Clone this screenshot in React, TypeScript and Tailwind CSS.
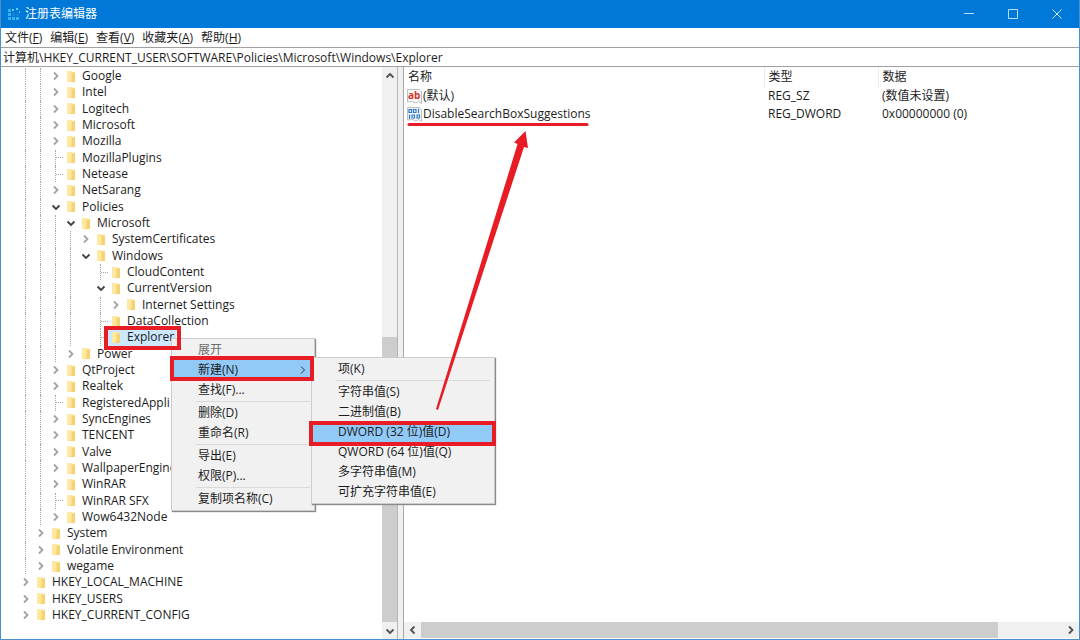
import React from 'react';

type TreeRow = { name: string; level: number; state?: 'open' | 'closed'; selected?: boolean };

const rows: TreeRow[] = [
  { name: 'Google', level: 3, state: 'closed' },
  { name: 'Intel', level: 3, state: 'closed' },
  { name: 'Logitech', level: 3, state: 'closed' },
  { name: 'Microsoft', level: 3, state: 'closed' },
  { name: 'Mozilla', level: 3, state: 'closed' },
  { name: 'MozillaPlugins', level: 3 },
  { name: 'Netease', level: 3 },
  { name: 'NetSarang', level: 3, state: 'closed' },
  { name: 'Policies', level: 3, state: 'open' },
  { name: 'Microsoft', level: 4, state: 'open' },
  { name: 'SystemCertificates', level: 5, state: 'closed' },
  { name: 'Windows', level: 5, state: 'open' },
  { name: 'CloudContent', level: 6 },
  { name: 'CurrentVersion', level: 6, state: 'open' },
  { name: 'Internet Settings', level: 7, state: 'closed' },
  { name: 'DataCollection', level: 6 },
  { name: 'Explorer', level: 6, selected: true },
  { name: 'Power', level: 4, state: 'closed' },
  { name: 'QtProject', level: 3, state: 'closed' },
  { name: 'Realtek', level: 3, state: 'closed' },
  { name: 'RegisteredAppli', level: 3 },
  { name: 'SyncEngines', level: 3, state: 'closed' },
  { name: 'TENCENT', level: 3, state: 'closed' },
  { name: 'Valve', level: 3, state: 'closed' },
  { name: 'WallpaperEngine', level: 3, state: 'closed' },
  { name: 'WinRAR', level: 3, state: 'closed' },
  { name: 'WinRAR SFX', level: 3 },
  { name: 'Wow6432Node', level: 3, state: 'closed' },
  { name: 'System', level: 2, state: 'closed' },
  { name: 'Volatile Environment', level: 2, state: 'closed' },
  { name: 'wegame', level: 2, state: 'closed' },
  { name: 'HKEY_LOCAL_MACHINE', level: 1, state: 'closed' },
  { name: 'HKEY_USERS', level: 1, state: 'closed' },
  { name: 'HKEY_CURRENT_CONFIG', level: 1, state: 'closed' },
];

// a guide runs through a row when a later sibling exists at that level
const hasGuide = (index: number, level: number) => {
  const next = rows.slice(index + 1).find(r => r.level <= level);
  return !!next && next.level === level;
};

const menus = [
  { label: '文件', key: 'F' },
  { label: '编辑', key: 'E' },
  { label: '查看', key: 'V' },
  { label: '收藏夹', key: 'A' },
  { label: '帮助', key: 'H' },
];

const keyMenu = ['展开', '新建(N)', '查找(F)...', '-', '删除(D)', '重命名(R)', '-', '导出(E)', '权限(P)...', '-', '复制项名称(C)'];
const newMenu = ['项(K)', '-', '字符串值(S)', '二进制值(B)', 'DWORD (32 位)值(D)', 'QWORD (64 位)值(Q)', '多字符串值(M)', '可扩充字符串值(E)'];

const chevrons = {
  up: 'M1.5 6.5 5 3l3.5 3.5',
  down: 'M1.5 3.5 5 7l3.5-3.5',
  left: 'M6.5 1.5 3 5l3.5 3.5',
  right: 'M3 1.5 6.5 5 3 8.5',
};

const Chevron = ({ dir, thin, className }: { dir: keyof typeof chevrons; thin?: boolean; className: string }) => (
  <svg viewBox="0 0 10 10" className={`size-2.5 shrink-0 ${className}`} fill="none" stroke="currentColor" strokeWidth={thin ? 1 : 1.8}>
    <path d={chevrons[dir]} />
  </svg>
);

const Folder = () => (
  <svg width="10" height="13" viewBox="0 0 10 13" className="shrink-0">
    <path d="M1 1h4.500l.8.800H9V12H1z" fill="#ffe9a2" />
    <path d="M5.500 2.500H9V12H3l2.500-1z" fill="#f6d271" />
  </svg>
);

const AppIcon = () => (
  <svg width="14" height="14" viewBox="0 0 14 14" className="shrink-0">
    <g fill="#35b5ee">
      <path d="M1 2h3v3H1zM1 6h3v3H1zM1 10h3v3H1zM5 10h3v3H5zM9 10h3v3H9z" />
      <path d="M5 6h3v3H5zM9 7h3v2H9z" fill="#1583cf" />
      <path d="M5 2h2v2H5zM9 1h2v2H9zM12 4h1v2h-1z" fill="#56d3f5" />
    </g>
  </svg>
);

const ValueIcon = ({ kind }: { kind: 'string' | 'binary' }) => (
  <svg width="15" height="15" viewBox="0 0 15 15" className="shrink-0 overflow-visible">
    <path d="M.5.5h12l2 2v12l-3-2-3 1.500-3-1.500-5 .500z" fill="#f6f6f6" stroke="#b0b0b0" strokeWidth=".8" />
    {kind === 'string' ? (
      <text x="1" y="10" fontSize="10" fontWeight="700" fill="#d8352f">ab</text>
    ) : (
      <g fill="none" stroke="#2b78cc" strokeWidth="1.200">
        <path d="M2 2.500h2.500v3H2zM6.500 2.500H9v3H6.500zM11.500 1.800v4.400M2.500 7.500v4.500M5 8h2.500v3H5zM10 8h2.500v3H10z" />
      </g>
    )}
  </svg>
);

const ContextMenu = ({ items, active, disabled, submenu, className }: {
  items: string[]; active: string; disabled?: string; submenu?: boolean; className: string;
}) => (
  <div role="menu" className={`absolute flex flex-col border border-[#cccccc] bg-[#f1f1f1] py-px shadow-[1px_1px_1px_#8a8a8a] ${className}`}>
    {items.map((item, i) => item === '-' ? (
      <div key={i} role="separator" className="my-px ml-6 mr-1 h-px bg-[#dadada]" />
    ) : (
      <button key={i} role="menuitem" disabled={item === disabled}
        className={`flex h-5 items-center justify-between whitespace-nowrap pl-[26px] pr-1.5 text-left ${item === active ? 'bg-[#91c9f7]' : ''} ${item === disabled ? 'text-[#6d6d6d]' : ''}`}>
        {item}
        {submenu && item === active && <Chevron dir="right" thin className="text-[#333]" />}
      </button>
    ))}
  </div>
);

const App: React.FC = () => (
  <div className="relative flex h-screen min-h-[640px] flex-col overflow-hidden border-x border-b border-[#4b8fcb] bg-white font-['Open_Sans','Noto_Sans_CJK_SC',sans-serif] text-[12px] leading-4 text-[#1c1c1c]">
    <header className="flex h-7 shrink-0 items-center justify-between bg-[#0078d7] text-white">
      <div className="flex items-center gap-1 pl-1.5">
        <AppIcon />
        <h1>注册表编辑器</h1>
      </div>
      <div className="flex h-full">
        <button aria-label="最小化" className="flex w-11 items-center justify-center">
          <svg width="10" height="10" stroke="#b9dcf7"><path d="M0 4.500h10" /></svg>
        </button>
        <button aria-label="最大化" className="flex w-11 items-center justify-center">
          <svg width="10" height="10" stroke="#b9dcf7" fill="none"><path d="M.5.5h9v9h-9z" /></svg>
        </button>
        <button aria-label="关闭" className="flex w-11 items-center justify-center">
          <svg width="10" height="10" stroke="#d5eafa"><path d="m.5.500 9 9m0-9-9 9" /></svg>
        </button>
      </div>
    </header>

    <nav className="flex h-5 shrink-0 items-center gap-2 border-b border-[#a0a0a0] pl-1">
      {menus.map(m => (
        <button key={m.key}>{m.label}(<u>{m.key}</u>)</button>
      ))}
    </nav>

    <input aria-label="地址" defaultValue={'计算机\\HKEY_CURRENT_USER\\SOFTWARE\\Policies\\Microsoft\\Windows\\Explorer'}
      className="h-[19px] w-full shrink-0 border-b border-[#a0a0a0] pl-0.5 outline-none" />

    <main className="flex min-h-0 flex-1">
      <aside className="flex w-[397px] shrink-0 border-r border-[#b5b5b5]">
        <div role="tree" className="flex min-w-0 flex-1 flex-col overflow-hidden pb-4 pl-[17px] pt-px">
          {rows.map((row, i) => (
            <div key={i} role="treeitem" aria-level={row.level} className="flex min-h-4 flex-1 items-stretch whitespace-nowrap">
              {Array.from({ length: row.level - 1 }, (_, g) => (
                <div key={g} className="flex w-[15px] shrink-0 justify-center">
                  {hasGuide(i, g + 1) && <div className="border-l border-dotted border-[#a8a8a8]" />}
                </div>
              ))}
              <div className="flex w-[15px] shrink-0 items-center justify-center">
                {row.state === 'closed' && <Chevron dir="right" className="text-[#a3a3a3]" />}
                {row.state === 'open' && <Chevron dir="down" className="text-[#404040]" />}
                {!row.state && (
                  <>
                    <div className="ml-[7px] self-stretch border-l border-dotted border-[#a8a8a8]" />
                    <div className="flex-1 border-t border-dotted border-[#a8a8a8]" />
                  </>
                )}
              </div>
              <div className={`flex items-center ${row.selected ? 'bg-[#cce8ff]' : ''}`}>
                <div className="flex w-[15px] shrink-0 justify-center"><Folder /></div>
                <span className="pl-1 pr-0.5">{row.name}</span>
              </div>
            </div>
          ))}
        </div>
        <div className="flex w-[15px] shrink-0 flex-col items-center bg-[#f0f0f0]">
          <div className="flex h-[17px] shrink-0 items-center"><Chevron dir="up" className="text-[#505050]" /></div>
          <div className="flex w-full flex-1 flex-col justify-end">
            <div className="h-[53%] bg-[#cdcdcd]" />
          </div>
          <div className="flex h-[17px] shrink-0 items-center"><Chevron dir="down" className="text-[#505050]" /></div>
        </div>
      </aside>
      <div className="w-[5px] shrink-0 bg-[#f0f0f0]" />
      <section className="flex min-w-0 flex-1 flex-col border-l border-[#a8a8a8]">
        <div className="flex-1">
          <table className="w-full table-fixed text-left">
            <colgroup>
              <col className="w-[360px]" />
              <col className="w-[114px]" />
              <col />
            </colgroup>
            <thead>
              <tr className="h-5">
                <th className="pl-1 font-normal">名称</th>
                <th className="border-l border-[#ececec] pl-1 font-normal">类型</th>
                <th className="border-l border-[#ececec] pl-1 font-normal">数据</th>
              </tr>
            </thead>
            <tbody>
              <tr className="h-[18px]">
                <td><div className="flex items-center gap-px pl-[3px]"><ValueIcon kind="string" />(默认)</div></td>
                <td className="pl-1">REG_SZ</td>
                <td className="pl-1">(数值未设置)</td>
              </tr>
              <tr className="h-[18px]">
                <td><div className="flex items-center gap-px pl-[3px]"><ValueIcon kind="binary" />DisableSearchBoxSuggestions</div></td>
                <td className="pl-1">REG_DWORD</td>
                <td className="pl-1">0x00000000 (0)</td>
              </tr>
            </tbody>
          </table>
        </div>
        <div className="mb-px flex h-4 shrink-0 bg-[#f0f0f0]">
          <div className="flex w-[17px] items-center justify-center"><Chevron dir="left" className="text-[#505050]" /></div>
          <div className="flex-1"><div className="h-full w-[90%] bg-[#cdcdcd]" /></div>
          <div className="flex w-[17px] items-center justify-center"><Chevron dir="right" className="text-[#505050]" /></div>
        </div>
      </section>
    </main>

    <ContextMenu items={keyMenu} active="新建(N)" disabled="展开" submenu className="left-[170px] top-[338px] w-[144px]" />
    <ContextMenu items={newMenu} active="DWORD (32 位)值(D)" className="left-[310px] top-[357px] w-[184px]" />

    {/* red highlights */}
    <svg width="600" height="460" className="pointer-events-none absolute left-0 top-0" fill="none" stroke="#e81c24">
      <rect x="105" y="328" width="73" height="20" strokeWidth="4" />
      <rect x="171" y="358" width="140" height="21" strokeWidth="4" />
      <rect x="310" y="423" width="183" height="21" strokeWidth="4" />
      <path d="M408 124.500h178" strokeWidth="3" strokeLinecap="round" />
      <path d="M524.500 131 513 142.500l3.500 1.500L435 409l2 1 86-263 4 1z" fill="#e81c24" stroke="none" />
    </svg>
  </div>
);

export default App;
